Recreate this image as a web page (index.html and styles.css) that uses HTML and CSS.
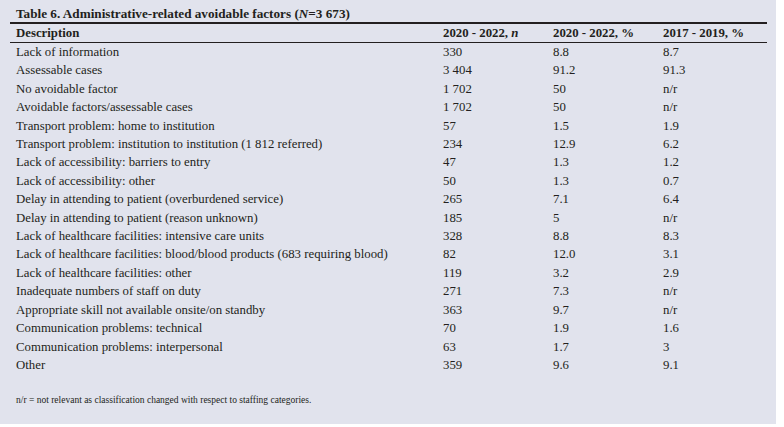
FILE: index.html
```html
<!DOCTYPE html>
<html>
<head>
<meta charset="utf-8">
<link rel="stylesheet" href="styles.css">
</head>
<body>
<div class="panel">
  <div class="title">Table 6. Administrative-related avoidable factors (<i>N</i>=3 673)</div>
  <table class="data">
    <thead>
      <tr><th class="c1">Description</th><th class="c2">2020 - 2022, <i>n</i></th><th class="c3">2020 - 2022, %</th><th class="c4">2017 - 2019, %</th></tr>
    </thead>
    <tbody>
      <tr><td>Lack of information</td><td>330</td><td>8.8</td><td>8.7</td></tr>
      <tr><td>Assessable cases</td><td>3 404</td><td>91.2</td><td>91.3</td></tr>
      <tr><td>No avoidable factor</td><td>1 702</td><td>50</td><td>n/r</td></tr>
      <tr><td>Avoidable factors/assessable cases</td><td>1 702</td><td>50</td><td>n/r</td></tr>
      <tr><td>Transport problem: home to institution</td><td>57</td><td>1.5</td><td>1.9</td></tr>
      <tr><td>Transport problem: institution to institution (1 812 referred)</td><td>234</td><td>12.9</td><td>6.2</td></tr>
      <tr><td>Lack of accessibility: barriers to entry</td><td>47</td><td>1.3</td><td>1.2</td></tr>
      <tr><td>Lack of accessibility: other</td><td>50</td><td>1.3</td><td>0.7</td></tr>
      <tr><td>Delay in attending to patient (overburdened service)</td><td>265</td><td>7.1</td><td>6.4</td></tr>
      <tr><td>Delay in attending to patient (reason unknown)</td><td>185</td><td>5</td><td>n/r</td></tr>
      <tr><td>Lack of healthcare facilities: intensive care units</td><td>328</td><td>8.8</td><td>8.3</td></tr>
      <tr><td>Lack of healthcare facilities: blood/blood products (683 requiring blood)</td><td>82</td><td>12.0</td><td>3.1</td></tr>
      <tr><td>Lack of healthcare facilities: other</td><td>119</td><td>3.2</td><td>2.9</td></tr>
      <tr><td>Inadequate numbers of staff on duty</td><td>271</td><td>7.3</td><td>n/r</td></tr>
      <tr><td>Appropriate skill not available onsite/on standby</td><td>363</td><td>9.7</td><td>n/r</td></tr>
      <tr><td>Communication problems: technical</td><td>70</td><td>1.9</td><td>1.6</td></tr>
      <tr><td>Communication problems: interpersonal</td><td>63</td><td>1.7</td><td>3</td></tr>
      <tr><td>Other</td><td>359</td><td>9.6</td><td>9.1</td></tr>
    </tbody>
  </table>
  <p class="note">n/r = not relevant as classification changed with respect to staffing categories.</p>
</div>
</body>
</html>
```
FILE: styles.css
```css
html, body {
  margin: 0;
  padding: 0;
  background: #ffffff;
}
.panel {
  width: 776px;
  height: 424px;
  box-sizing: border-box;
  padding: 0 9px 0 10px;
  background: #e1e3ed;
  color: #231f20;
  font-family: "Liberation Serif", "Times New Roman", serif;
  font-size: 12.8px;
}
.title {
  font-weight: bold;
  font-size: 13.2px;
  padding: 5px 0 0 6px;
  height: 17px;
  line-height: 17px;
  border-bottom: 2px solid #231f20;
}
.data {
  width: 757px;
  border-collapse: collapse;
  table-layout: fixed;
}
.data th, .data td {
  padding: 0 0 0 6px;
  text-align: left;
  white-space: nowrap;
  line-height: 18.4px;
  height: 18.4px;
}
.data th {
  font-weight: bold;
  height: 18px;
  line-height: 18px;
  border-bottom: 1px solid #231f20;
}
.c1 { width: 421px; }
.c2, .c3, .c4 { width: 104px; }
.note {
  margin: 20px 0 0 6px;
  font-size: 9.5px;
  line-height: 12px;
}
```
